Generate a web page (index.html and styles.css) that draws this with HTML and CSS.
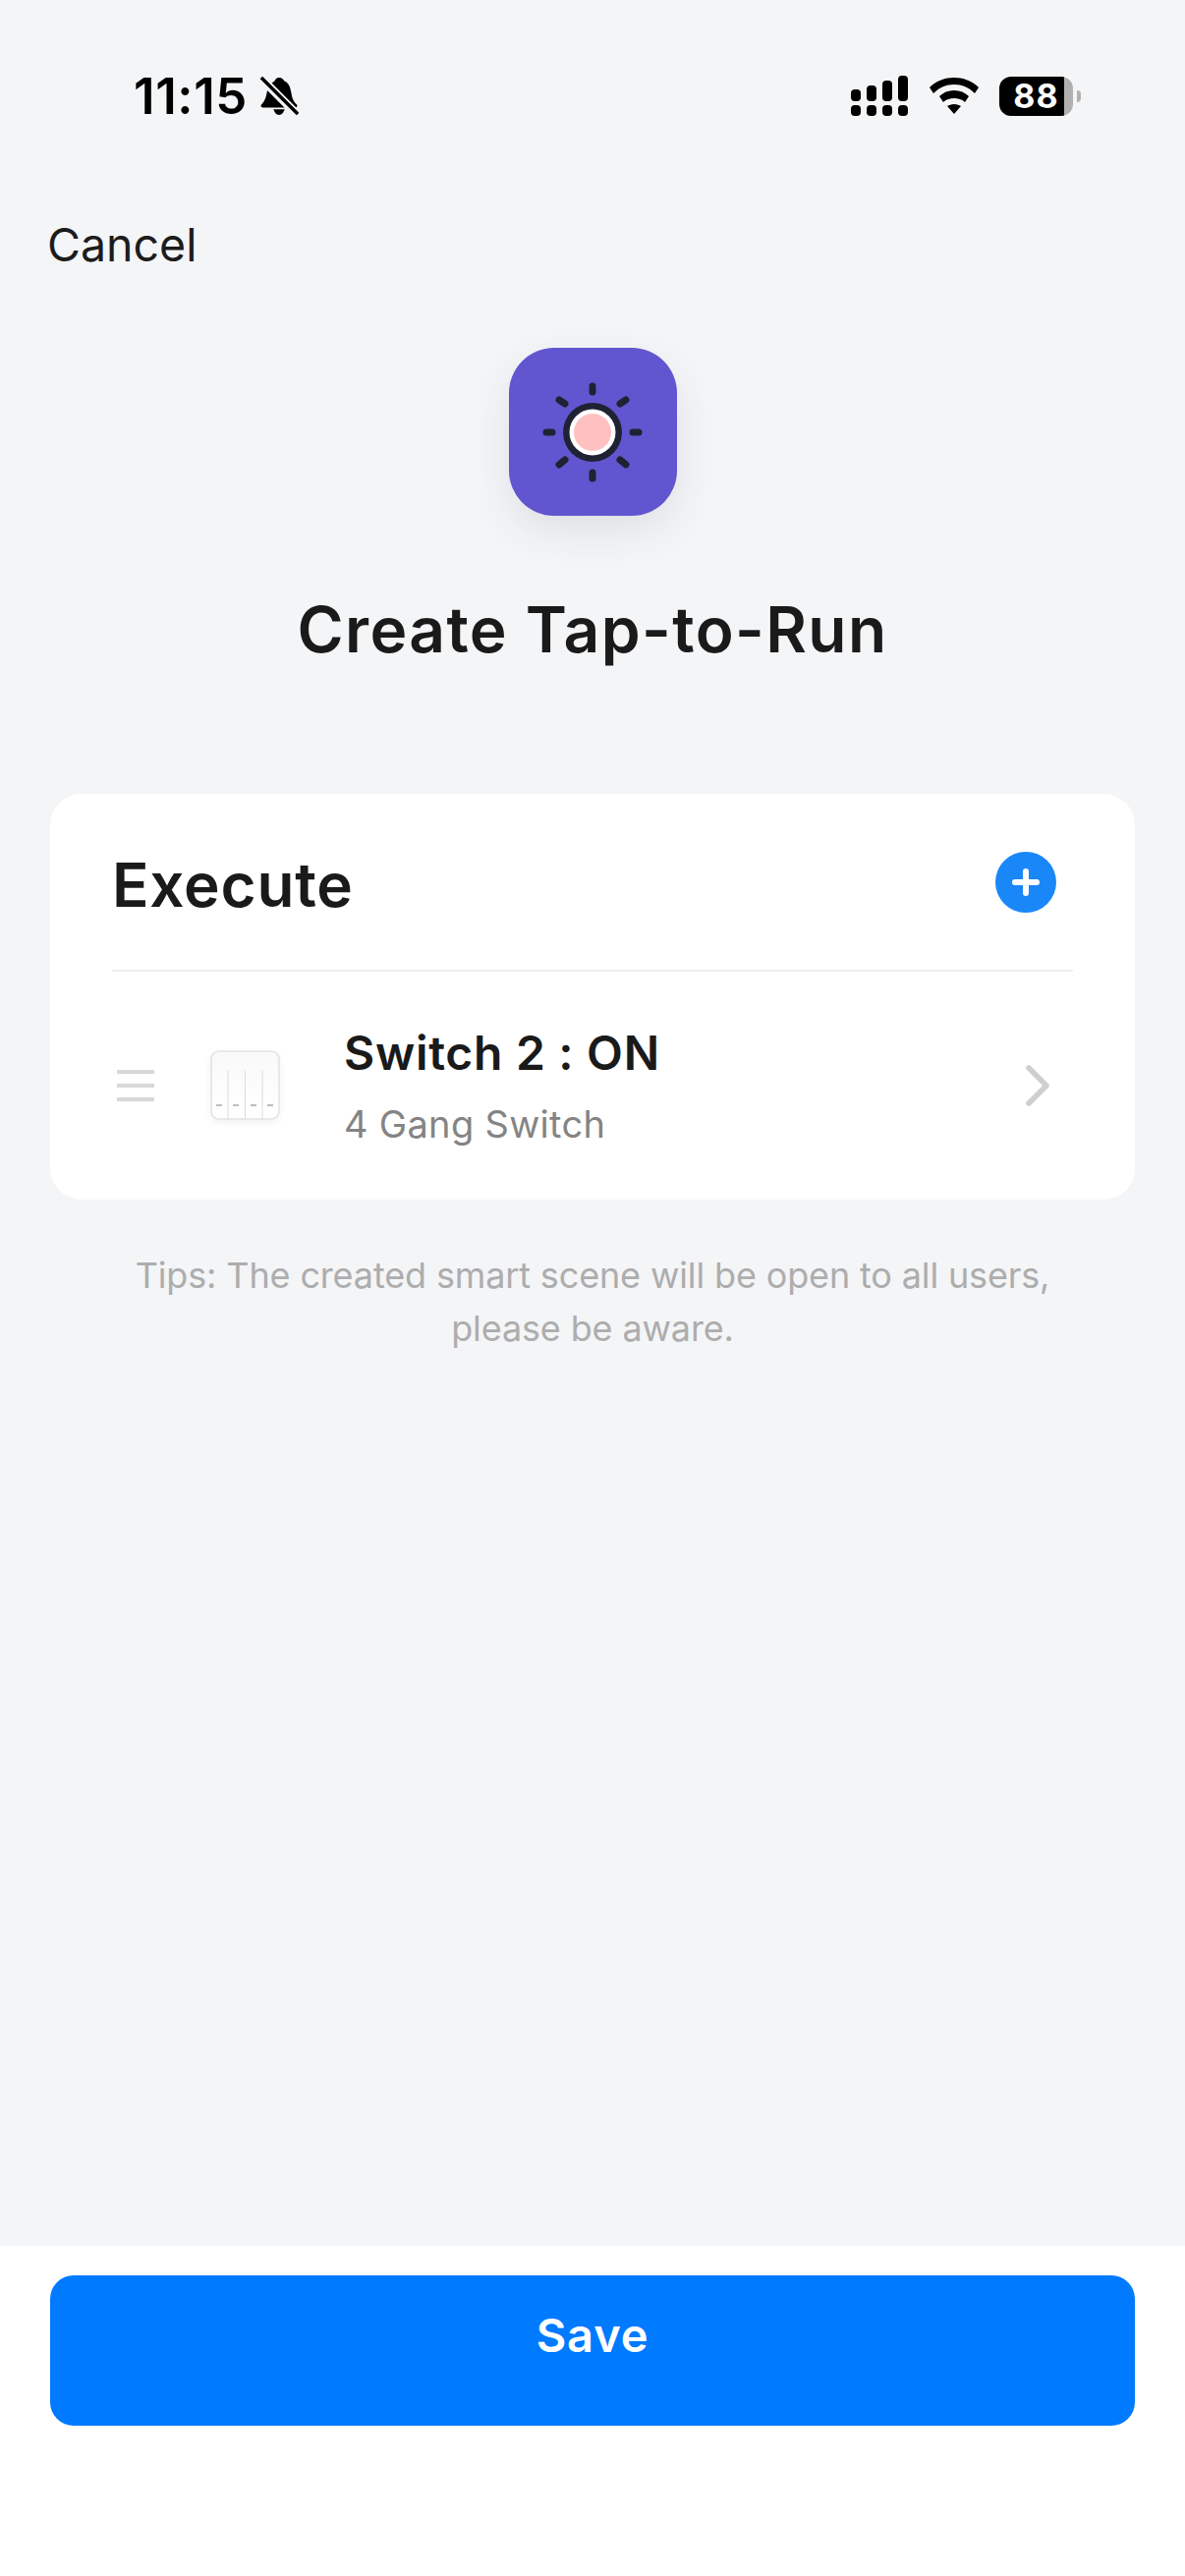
FILE: index.html
```html
<!DOCTYPE html>
<html lang="en">
<head>
<meta charset="utf-8">
<title>Create Tap-to-Run</title>
<link rel="stylesheet" href="styles.css">
</head>
<body>
<div class="screen">
  <div class="status">
    <div class="status-left">
      <span class="time">11:15</span>
      <svg class="bell" width="40" height="42" viewBox="0 0 42 42">
        <path d="M21 1c3 0 5 2 6 4 5 2 6 7 7 12 1 6 2 9 6 13 1 2 0 3-2 3H4c-2 0-3-1-2-3 4-4 5-8 6-13 1-5 3-9 8-12 1-2 2-4 5-4z" fill="#000"/>
        <path d="M15 35h12c-1 3-3 6-6 6s-5-3-6-6z" fill="#000"/>
        <path d="M1 1 42 42" stroke="#f4f5f7" stroke-width="9" fill="none"/>
        <path d="M2 1 41 40" stroke="#000" stroke-width="3.600" fill="none"/>
      </svg>
    </div>
    <div class="status-right">
      <svg width="60" height="42" viewBox="0 0 60 42">
        <rect x="1" y="14" width="10" height="12" rx="4"/><rect x="17" y="10" width="10" height="16" rx="4"/><rect x="33" y="5" width="10" height="21" rx="4"/><rect x="49" y="0" width="10" height="26" rx="4"/>
        <rect x="1" y="30" width="10" height="11" rx="4"/><rect x="17" y="30" width="10" height="11" rx="4"/><rect x="33" y="30" width="10" height="11" rx="4"/><rect x="49" y="30" width="10" height="11" rx="4"/>
      </svg>
      <svg class="wifi" width="50" height="38" viewBox="0 0 50 38">
        <path d="M25 0c9 0 18 3 25 10l-4 6C40 10 33 7 25 7S10 10 4 16L0 10C7 3 16 0 25 0z"/>
        <path d="M25 13c6 0 11 2 15 6l-4 6c-3-3-7-4-11-4s-8 1-11 4l-4-6c4-4 9-6 15-6z"/>
        <path d="M25 27c3 0 5 1 7 2l-7 8-7-8c2-1 4-2 7-2z"/>
      </svg>
      <div class="battery">
        <div class="battery-body"><span class="battery-num">88</span></div>
        <div class="battery-tip"></div>
      </div>
    </div>
  </div>

  <div class="cancel-row"><span class="cancel">Cancel</span></div>

  <div class="scene-icon">
    <svg width="102" height="102" viewBox="0 0 102 102">
      <g stroke="#1f2233" stroke-width="7" stroke-linecap="round" fill="none">
        <path d="M51 4v6M51 92v6M4 51h6M92 51h6M17 18l6 4M85 18l-6 4M17 84l6-5M85 84l-6-5"/>
      </g>
      <circle cx="51" cy="51" r="30" fill="#1f2233"/>
      <circle cx="51" cy="51" r="23.500" fill="#fff"/>
      <circle cx="51" cy="51" r="19" fill="#fec0c0"/>
    </svg>
  </div>

  <h1 class="title">Create Tap-to-Run</h1>

  <section class="card">
    <div class="card-head">
      <h2 class="card-title">Execute</h2>
      <svg class="add" width="62" height="62" viewBox="0 0 62 62">
        <circle cx="31" cy="31" r="31" fill="#1a87f9"/>
        <path d="M31 20v22M20 31h22" stroke="#fff" stroke-width="6" stroke-linecap="round"/>
      </svg>
    </div>
    <div class="action">
      <div class="drag"><i></i><i></i><i></i></div>
      <svg class="switch" width="72" height="72" viewBox="0 0 72 72">
        <defs>
          <linearGradient id="plate" x1="0" y1="0" x2="0" y2="1">
            <stop offset="0" stop-color="#f9f9f9"/><stop offset="1" stop-color="#ffffff"/>
          </linearGradient>
        </defs>
        <rect x="1" y="1" width="69" height="69" rx="8" fill="url(#plate)" stroke="#e2e2e2" stroke-width="1.500"/>
        <path d="M18 21v49M35.500 21v49M53 21v49" stroke="#dcdcdc" stroke-width="1"/>
        <path d="M6 56h6M23 56h6M41 56h6M58 56h6" stroke="#a8a8a8" stroke-width="1.500"/>
      </svg>
      <div class="action-text">
        <div class="action-name">Switch 2 : ON</div>
        <div class="action-sub">4 Gang Switch</div>
      </div>
      <svg class="chev" width="26" height="44" viewBox="0 0 26 44">
        <path d="M4 4 22 22 4 40" fill="none" stroke="#cfcfcf" stroke-width="5.500" stroke-linecap="round" stroke-linejoin="round"/>
      </svg>
    </div>
  </section>

  <p class="tips">Tips: The created smart scene will be open to all users, please be aware.</p>

  <div class="spacer"></div>

  <footer class="footer">
    <button class="save">Save</button>
  </footer>
</div>
</body>
</html>
```
FILE: styles.css
```css
* { box-sizing: border-box; }
html, body { margin: 0; padding: 0; }
body { width: 1206px; height: 2622px; background: #f4f5f7; font-family: Inter, "Noto Sans", sans-serif; color: #1c1c1c; overflow: hidden; }
.screen { width: 1206px; height: 2622px; display: flex; flex-direction: column; }

.status { height: 190px; padding: 72px 106px 0 136px; display: flex; justify-content: space-between; align-items: flex-start; flex-shrink: 0; }
.status-left { display: flex; align-items: center; gap: 12px; height: 52px; }
.time { font-size: 51px; font-weight: 600; color: #000; letter-spacing: 0.6px; line-height: 52px; }
.status-right { display: flex; align-items: center; gap: 21px; height: 52px; fill: #000; }
.battery { display: flex; align-items: center; }
.battery-body { width: 75px; height: 40px; border-radius: 12px; background: linear-gradient(90deg, #000 0, #000 88%, #b0b0b0 88%); display: flex; align-items: center; justify-content: center; }
.battery-num { color: #fff; font-size: 34px; letter-spacing: 1px; font-weight: 700; line-height: 40px; }
.battery-tip { width: 4px; height: 12px; margin-left: 4px; background: #b0b0b0; border-radius: 0 6px 6px 0; }

.cancel-row { height: 164px; padding: 29px 0 0 48px; flex-shrink: 0; }
.cancel { font-size: 46.500px; line-height: 60px; color: #1c1c1c; }

.scene-icon { width: 171px; height: 171px; margin: 0 auto; border-radius: 46px; background: #6156cf; display: flex; align-items: center; justify-content: center; box-shadow: 0 16px 40px rgba(60, 60, 90, 0.10); flex-shrink: 0; }

.title { margin: 67px 0 0; text-align: center; font-size: 64px; letter-spacing: 1.400px; line-height: 98px; font-weight: 600; color: #1a1a1a; }

.card { margin: 118px 51px 0; height: 413px; background: #fff; border-radius: 32px; padding: 0 63px; flex-shrink: 0; }
.card-head { height: 181px; border-bottom: 2px solid #ededed; display: flex; align-items: center; justify-content: space-between; padding: 0 17px 0 0; }
.card-title { margin: 6px 0 0; font-size: 62px; letter-spacing: 0.800px; font-weight: 600; color: #1a1a1a; line-height: 80px; }
.action { display: flex; align-items: center; height: 230px; padding-top: 2px; }
.drag { width: 38px; margin-left: 5px; display: flex; flex-direction: column; gap: 9.500px; }
.drag i { display: block; height: 4.500px; background: #d8d8d8; }
.switch { margin-left: 57px; filter: drop-shadow(0 3px 3px rgba(0, 0, 0, 0.05)); }
.action-text { margin-left: 64px; flex: 1; }
.action-name { font-size: 48px; letter-spacing: 0.700px; font-weight: 600; line-height: 60px; color: #1a1a1a; }
.action-sub { font-size: 38px; letter-spacing: 0.300px; line-height: 50px; margin-top: 17px; color: #848484; }
.chev { margin-right: 23px; }

.tips { margin: 50px auto 0; width: 960px; text-align: center; font-size: 36px; letter-spacing: -0.140px; line-height: 54px; color: #adadad; }

.spacer { flex: 1; }
.footer { height: 336px; background: #fff; padding: 30px 51px 0; flex-shrink: 0; }
.save { display: block; width: 100%; height: 153px; border: 0; border-radius: 24px; padding: 0 0 32px; background: #007aff; color: #fff; font-family: inherit; font-size: 47px; letter-spacing: 0.800px; font-weight: 600; }
```
